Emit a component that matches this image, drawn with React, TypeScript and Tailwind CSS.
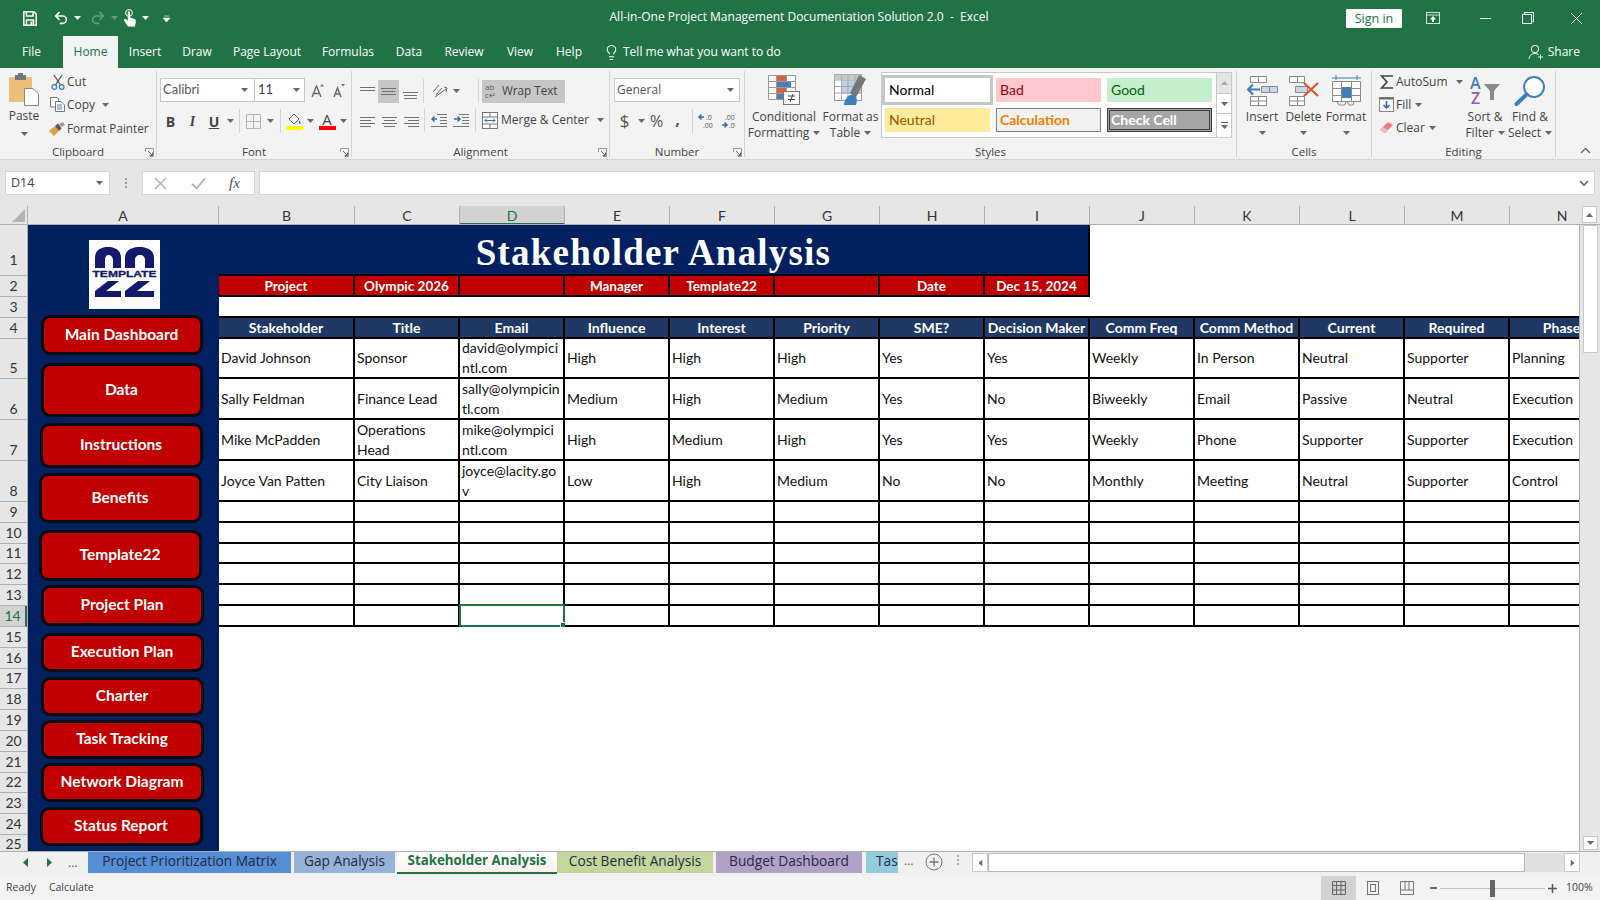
import { Lightbulb, Redo2, Undo2 } from "lucide-react";
import type { ReactNode } from "react";

const calibri = "font-['Lato',sans-serif]";

function Caret({ className = "" }: { className?: string }) {
  return (
    <svg width="7" height="4" viewBox="0 0 7 4" className={className}>
      <path d="M0 0h7L3.5 4z" fill="#666" />
    </svg>
  );
}

function Sep({ className = "" }: { className?: string }) {
  return <div className={"w-px h-[24px] bg-[#d4d4d4] " + className} />;
}

function Launcher() {
  return (
    <svg width="9" height="9" viewBox="0 0 9 9" className="absolute right-[2px] bottom-[0px]">
      <path d="M.5 4V.5H8.5V8.5H5" fill="none" stroke="#999" />
      <path d="M3 3L7.5 7.5M7.5 4.5V7.5H4.5" fill="none" stroke="#666" />
    </svg>
  );
}

function Group({ label, className, children, launcher = false }: { label: string; className: string; children: ReactNode; launcher?: boolean }) {
  return (
    <div className={"relative h-[86px] mt-[3px] border-r border-[#d4d4d4] flex flex-col shrink-0 " + className}>
      <div className="flex-1 min-h-0">{children}</div>
      <div className="h-[14px] leading-[14px] text-center text-[11.5px] text-[#444] -mb-[2px]">{label}</div>
      {launcher && <Launcher />}
    </div>
  );
}

function Slot({ className, children }: { className: string; children?: ReactNode }) {
  return <div className={"flex items-center justify-center shrink-0 " + className}>{children}</div>;
}

function Logo() {
  return (
    <svg width="71" height="69" viewBox="0 0 71 69" className="ml-[61px] mt-[15px] block bg-white">
      <g fill="#14196e">
        <path d="M6 28V18C6 10 12 7 19 7S32 10 32 18V28H24V20C24 17 22 15 19.500 15S16 17 16 20V28Z" />
        <path d="M36 28V18C36 10 43 7 50.500 7S65 10 65 18V28H56V20C56 17 54 15 51 15S46 17 46 20V28Z" />
        <path d="M6 57V51L19 41H30L17 51H32V57Z" />
        <path d="M36 57V51L49 41H61L48 51H65V57Z" />
      </g>
      <rect x="2" y="28" width="67" height="10" fill="#fff" />
      <text x="35.500" y="36.500" textAnchor="middle" fontFamily="Liberation Sans, sans-serif" fontWeight="700" fontSize="9" textLength="64" lengthAdjust="spacingAndGlyphs" fill="#14196e" stroke="#14196e" strokeWidth=".3">TEMPLATE</text>
    </svg>
  );
}

function NavButton({ label, className }: { label: string; className: string }) {
  return (
    <div className={"flex items-center justify-center bg-[#c00000] border-[3px] border-[#0a0a14] rounded-[9px] text-white font-bold text-[15.5px] pb-[1px] pr-[1px] " + className}>
      {label}
    </div>
  );
}

function TitleBar() {
  return (
    <div className="h-[36px] bg-[#217346] flex items-center text-white shrink-0">
      <div className="w-[23px]" />
      <svg width="14" height="15" viewBox="0 0 14 15" fill="none" stroke="#fff" strokeWidth="1.500">
        <path d="M.8.8H11L13.200 3V14.200H.8Z" />
        <path d="M3.500 1V5H10V1M3.500 14V9H10.500V14" />
        <path d="M7.500 10.500H9.500V14H7.500Z" fill="#fff" stroke="none" />
      </svg>
      <div className="w-[16px]" />
      <Undo2 size={16} strokeWidth={2.4} />
      <Caret className="ml-[5px] [&_path]:fill-white" />
      <Redo2 size={16} strokeWidth={2.4} className="ml-[9px] text-[#5f9f7f]" />
      <Caret className="ml-[5px] [&_path]:fill-[#5f9f7f]" />
      <svg width="14" height="18" viewBox="0 0 14 18" className="ml-[5px]">
        <circle cx="6" cy="4" r="3.400" fill="none" stroke="#fff" />
        <path d="M4.800 3.200C4.800 2 7 2 7 3.200V8.500L11.500 10C13 10.500 13 12 12.800 13L12 17.500H5L1 11.500C.5 10 2.500 9.500 3.500 10.500L4.800 11.800Z" fill="#fff" />
      </svg>
      <Caret className="ml-[5px] [&_path]:fill-white" />
      <svg width="7" height="7" viewBox="0 0 7 7" className="ml-[14px]"><path d="M1 1H6M0 3H7L3.500 7Z" fill="#fff" stroke="#fff" strokeWidth=".6" /></svg>
      <div className="flex-1 text-center text-[12px] ml-[280px] mr-[198px] pb-[2px] whitespace-nowrap">All-in-One Project Management Documentation Solution 2.0&nbsp; -&nbsp; Excel</div>
      <div className="w-[56px] h-[19px] bg-white text-[#217346] text-[12.500px] leading-[19px] text-center rounded-[1px] mr-[22px]">Sign in</div>
      <svg width="14" height="12" viewBox="0 0 14 12" fill="none" stroke="#cfe3d8" className="mr-[40px] ml-[2px]">
        <rect x=".5" y=".5" width="13" height="11" />
        <path d="M.5 3H13.500" />
        <path d="M7 4L10 7.500H8V10H6V7.500H4Z" fill="#fff" stroke="none" />
      </svg>
      <div className="w-[11px] h-px bg-white mr-[31px]" />
      <svg width="12" height="12" viewBox="0 0 12 12" fill="none" stroke="#fff" className="mr-[36px]">
        <rect x=".5" y="2.500" width="9" height="9" />
        <path d="M2.500 2.500V.5H11.500V9.500H9.500" />
      </svg>
      <svg width="13" height="13" viewBox="0 0 13 13" stroke="#fff" className="mr-[17px]"><path d="M1 1L12 12M12 1L1 12" /></svg>
    </div>
  );
}

function TabRow() {
  const tabs = [
    { label: "Insert", w: "w-[54px]" },
    { label: "Draw", w: "w-[50px]" },
    { label: "Page Layout", w: "w-[90px]" },
    { label: "Formulas", w: "w-[72px]" },
    { label: "Data", w: "w-[50px]" },
    { label: "Review", w: "w-[60px]" },
    { label: "View", w: "w-[52px]" },
    { label: "Help", w: "w-[46px]" },
  ];
  return (
    <div className="h-[32px] bg-[#217346] flex items-stretch text-white text-[12px] shrink-0">
      <div className="w-[63px] flex items-center justify-center">File</div>
      <div className="w-[55px] bg-[#f3f3f3] text-[#217346] flex items-center justify-center">Home</div>
      {tabs.map((t) => (
        <div key={t.label} className={t.w + " flex items-center justify-center"}>{t.label}</div>
      ))}
      <div className="flex items-center ml-[11px]">
        <Lightbulb size={17} strokeWidth={1.500} />
        <span className="ml-[3px]">Tell me what you want to do</span>
      </div>
      <div className="flex items-center ml-auto mr-[20px]">
        <svg width="16" height="16" viewBox="0 0 16 16" fill="none" stroke="#fff" className="mr-[4px]">
          <circle cx="7" cy="5" r="3.700" />
          <path d="M1 15C1.500 11 4 9.500 7 9.500C8.500 9.500 9.500 10 10.500 10.800M12.500 10.500V15.500M10 13H15" />
        </svg>
        Share
      </div>
    </div>
  );
}

function SmallRow({ icon, label, caret, caretClass = "ml-[5px]", className = "" }: { icon: ReactNode; label: string; caret?: boolean; caretClass?: string; className?: string }) {
  return (
    <div className={"flex items-center h-[23px] whitespace-nowrap " + className}>
      <div className="w-[19px] flex justify-center">{icon}</div>
      <span>{label}</span>
      {caret && <Caret className={caretClass} />}
    </div>
  );
}

function TallButton({ icon, lines, w }: { icon: ReactNode; lines: string[]; w: string }) {
  return (
    <div className={"flex flex-col items-center shrink-0 " + w}>
      <div className="h-[38px] flex items-center justify-center">{icon}</div>
      <div className="leading-[16px] text-center whitespace-nowrap">{lines[0]}</div>
      <div className="leading-[16px] h-[16px] text-center whitespace-nowrap flex items-center">
        {lines[1]}
        <Caret className={lines[1] ? "ml-[4px]" : ""} />
      </div>
    </div>
  );
}

function Lines({ rows }: { rows: [number, number, number][] }) {
  return (
    <svg width="15" height="15" viewBox="0 0 15 15" stroke="#707070">
      {rows.map((r, i) => (
        <path key={i} d={`M${r[0]} ${r[2]}.5H${r[1]}`} />
      ))}
    </svg>
  );
}

function Clipboard() {
  return (
    <Group label="Clipboard" className="w-[157px]" launcher>
      <div className="flex">
        <div className="w-[48px] flex flex-col items-center">
          <svg width="32" height="33" viewBox="0 0 32 33" className="mt-[2px]">
            <path d="M1 4H24V29H1Z" fill="#ecc07a" />
            <rect x="7" y="2" width="11" height="5" fill="#777" />
            <rect x="10" y="0" width="5" height="3" fill="#777" />
            <path d="M16.500 15.500H25L30.500 21V32.500H16.500Z" fill="#fff" stroke="#888" />
          </svg>
          <div className="leading-[16px] mt-[2px]">Paste</div>
          <Caret className="mt-[8px]" />
        </div>
        <div className="-mt-[1px]">
          <SmallRow label="Cut" icon={
            <svg width="14" height="16" viewBox="0 0 14 16" fill="none">
              <path d="M4.500 11L11 1M9.500 11L3 1" stroke="#555" strokeWidth="1.300" />
              <circle cx="3.300" cy="13" r="2.300" stroke="#3f7fbf" strokeWidth="1.300" />
              <circle cx="10.700" cy="13" r="2.300" stroke="#3f7fbf" strokeWidth="1.300" />
            </svg>} />
          <SmallRow label="Copy" caret caretClass="ml-[7px]" icon={
            <svg width="15" height="15" viewBox="0 0 15 15" fill="#fff" stroke="#777">
              <path d="M.5.5H7L8.500 2V10H.5Z" />
              <path d="M5.500 4.500H11L14.500 8V14.500H5.500Z" />
              <path d="M7 8H12M7 10H12M7 12H12" stroke="#4f81bd" />
            </svg>} />
          <div className="text-[11.7px] pt-[1px]">
            <SmallRow label="Format Painter" icon={
              <svg width="17" height="14" viewBox="0 0 17 14">
                <path d="M0 9L6 4L10 9L5 14Z" fill="#e0a14f" />
                <path d="M6 4L9 1.500L12.500 6.500L10 9Z" fill="#555" />
                <path d="M10 2L14 0L16 3L12 5Z" fill="#999" />
              </svg>} />
          </div>
        </div>
      </div>
    </Group>
  );
}

function FontGroup() {
  return (
    <Group label="Font" className="w-[195px]" launcher>
      <div className="flex items-center pt-[7px] pl-[3px]">
        <div className="w-[95px] h-[24px] bg-white border border-[#c8c8c8] flex items-center justify-between pl-[2px] pr-[6px] text-[#555] text-[12.500px]">
          <span className={calibri + " text-[13px]"}>Calibri</span><Caret />
        </div>
        <div className="w-[50px] h-[24px] bg-white border border-l-0 border-[#c8c8c8] flex items-center justify-between pl-[3px] pr-[4px] text-[#444]">
          <span className={calibri + " text-[13px]"}>11</span><Caret />
        </div>
        <Slot className="w-[22px] ml-[1px]">
          <svg width="15" height="15" viewBox="0 0 15 15" fill="none" stroke="#666" strokeWidth="1.400"><path d="M2 14L6.500 3L11 14M3.500 10.500H9.500" /><path d="M10 3.500L12 1L14 3.500Z" fill="#3f7fbf" stroke="none" /></svg>
        </Slot>
        <Slot className="w-[21px]">
          <svg width="15" height="15" viewBox="0 0 15 15" fill="none" stroke="#666" strokeWidth="1.400"><path d="M3 14L6.500 5L10 14M4.200 11H8.800" /><path d="M10 1L12 3.500L14 1Z" fill="#3f7fbf" stroke="none" /></svg>
        </Slot>
      </div>
      <div className="flex items-center mt-[7px] pl-[3px] h-[24px] text-[#444] text-[14px]">
        <Slot className="w-[21px] font-bold">B</Slot>
        <Slot className="w-[23px] italic font-bold font-['Liberation_Serif',serif]">I</Slot>
        <Slot className="w-[20px] font-bold underline">U</Slot>
        <Slot className="w-[12px]"><Caret /></Slot>
        <Slot className="w-[7px]"><Sep /></Slot>
        <Slot className="w-[21px]">
          <svg width="15" height="15" viewBox="0 0 15 15" fill="none" stroke="#b4b4b4"><path d="M.5.5H14.500V14.500H.5ZM7.500.5V14.500M.5 7.500H14.500" /></svg>
        </Slot>
        <Slot className="w-[12px]"><Caret /></Slot>
        <Slot className="w-[8px]"><Sep /></Slot>
        <Slot className="w-[20px]">
          <svg width="17" height="18" viewBox="0 0 17 18">
            <path d="M3 7L8 2L13 7L8 12Z" fill="#fff" stroke="#666" />
            <path d="M13 8C15 10 15 11.500 14 12C12.500 12 12.500 10 13 8Z" fill="#3f7fbf" />
            <rect x="0" y="14" width="17" height="4" fill="#ffff00" />
          </svg>
        </Slot>
        <Slot className="w-[12px]"><Caret /></Slot>
        <Slot className="w-[22px] flex-col leading-none">
          <span className="text-[15px] leading-[14px] text-[#444]">A</span>
          <span className="w-[17px] h-[4px] bg-[#ff0000]" />
        </Slot>
        <Slot className="w-[10px]"><Caret /></Slot>
      </div>
    </Group>
  );
}

function Alignment() {
  return (
    <Group label="Alignment" className="w-[258px]" launcher>
      <div className="flex items-center pt-[8px] pl-[4px] h-[32px]">
        <Slot className="w-[22px]"><Lines rows={[[0, 15, 3], [0, 15, 6]]} /></Slot>
        <Slot className="w-[21px] h-[23px] bg-[#c6c6c6]"><Lines rows={[[0, 15, 4], [1, 14, 7], [0, 15, 10]]} /></Slot>
        <Slot className="w-[22px]"><Lines rows={[[0, 15, 8], [1, 14, 11], [1, 14, 14]]} /></Slot>
        <Slot className="w-[5px]"><Sep /></Slot>
        <Slot className="w-[24px] ml-[2px]">
          <svg width="18" height="16" viewBox="0 0 18 16" fill="none" stroke="#666"><path d="M2 9L8 2M5 12L11 5M4 14L15 6" /><path d="M13 4L16 5L15 9" /></svg>
        </Slot>
        <Caret className="ml-[1px]" />
        <Sep className="ml-[18px]" />
        <div className="w-[83px] h-[23px] ml-[3px] bg-[#c6c6c6] flex items-center pl-[3px] text-[#444]">
          <span className="w-[16px] text-[8px] leading-[8px] text-[#555]">ab<br />c↵</span>
          <span className="ml-[1px] text-[11.7px]">Wrap Text</span>
        </div>
      </div>
      <div className="flex items-center pt-[5px] pl-[4px]">
        <Slot className="w-[22px]"><Lines rows={[[0, 15, 4], [0, 11, 7], [0, 15, 10], [0, 11, 13]]} /></Slot>
        <Slot className="w-[22px]"><Lines rows={[[0, 15, 4], [2, 13, 7], [0, 15, 10], [2, 13, 13]]} /></Slot>
        <Slot className="w-[22px]"><Lines rows={[[0, 15, 4], [4, 15, 7], [0, 15, 10], [4, 15, 13]]} /></Slot>
        <Slot className="w-[4px]"><Sep /></Slot>
        <Slot className="w-[22px] ml-[2px]">
          <svg width="16" height="14" viewBox="0 0 16 14" fill="none"><path d="M6 1.500H16M9 4.500H16M9 7.500H16M9 10.500H16M0 13.500H16" stroke="#777" /><path d="M6 6H1M3.500 3.500L1 6L3.500 8.500" stroke="#2f6fb5" strokeWidth="1.500" /></svg>
        </Slot>
        <Slot className="w-[22px]">
          <svg width="16" height="14" viewBox="0 0 16 14" fill="none"><path d="M6 1.500H16M9 4.500H16M9 7.500H16M9 10.500H16M0 13.500H16" stroke="#777" /><path d="M1 6H7M4.500 3.500L7 6L4.500 8.500" stroke="#2f6fb5" strokeWidth="1.500" /></svg>
        </Slot>
        <Sep className="ml-[3px]" />
        <svg width="16" height="17" viewBox="0 0 16 17" fill="#fff" stroke="#777" className="ml-[6px]">
          <rect x=".5" y=".5" width="15" height="16" />
          <path d="M.5 5H15.500M.5 12H15.500M8 .5V5M8 12V16.500" />
          <path d="M3 8.500H13M5 6.500L3 8.500L5 10.500M11 6.500L13 8.500L11 10.500" stroke="#2f6fb5" fill="none" />
        </svg>
        <span className="ml-[3px] whitespace-nowrap text-[#444]">Merge &amp; Center</span>
        <Caret className="ml-[8px]" />
      </div>
    </Group>
  );
}

function NumberGroup() {
  return (
    <Group label="Number" className="w-[135px]" launcher>
      <div className="pt-[7px] pl-[4px]">
        <div className="w-[126px] h-[24px] bg-white border border-[#c8c8c8] flex items-center justify-between pl-[2px] pr-[5px] text-[#555]">General<Caret /></div>
      </div>
      <div className="flex items-center mt-[7px] h-[24px] text-[#555] pl-[5px]">
        <Slot className="w-[19px] text-[17px]">$</Slot>
        <Slot className="w-[14px]"><Caret /></Slot>
        <Slot className="w-[17px] text-[16px]">%</Slot>
        <Slot className="w-[25px] text-[16px] font-bold pb-[4px]">,</Slot>
        <Sep className="ml-[2px]" />
        <svg width="16" height="18" viewBox="0 0 16 18" className="ml-[6px] overflow-visible">
          <path d="M0 5H5M2.500 2.500L0 5L2.500 7.500" fill="none" stroke="#2f6fb5" strokeWidth="1.500" />
          <text x="7" y="8" fontSize="7" fill="#555" fontFamily="Open Sans, sans-serif">.0</text>
          <text x="4" y="16" fontSize="7" fill="#555" fontFamily="Open Sans, sans-serif">.00</text>
        </svg>
        <svg width="16" height="18" viewBox="0 0 16 18" className="ml-[7px] overflow-visible">
          <text x="3" y="8" fontSize="7" fill="#555" fontFamily="Open Sans, sans-serif">.00</text>
          <path d="M0 13H5M2.500 10.500L5 13L2.500 15.500" fill="none" stroke="#2f6fb5" strokeWidth="1.500" />
          <text x="7" y="16" fontSize="7" fill="#555" fontFamily="Open Sans, sans-serif">.0</text>
        </svg>
      </div>
    </Group>
  );
}

function Styles() {
  return (
    <Group label="Styles" className="w-[492px]">
      <div className="flex text-[#444]">
        <div className="w-[3px]" />
        <TallButton w="w-[72px]" lines={["Conditional", "Formatting"]} icon={
          <svg width="32" height="30" viewBox="0 0 32 30">
            <path d="M.5.5H27.500V24.500H.5ZM.5 6.500H27.500M.5 12.500H27.500M.5 18.500H27.500M8.500.5V24.500M18.500.5V24.500" fill="#fff" stroke="#9a9a9a" />
            <rect x="9" y="1" width="9" height="5" fill="#d9623c" />
            <rect x="9" y="7" width="14" height="5" fill="#4a7ebb" />
            <rect x="9" y="13" width="9" height="5" fill="#d9623c" />
            <rect x="9" y="19" width="6" height="5" fill="#4a7ebb" />
            <rect x="15.500" y="16.500" width="16" height="13" fill="#fff" stroke="#777" />
            <path d="M20 21H27M20 24.500H27M25 19L22 27" stroke="#444" fill="none" />
          </svg>} />
        <TallButton w="w-[61px]" lines={["Format as", "Table"]} icon={
          <svg width="33" height="32" viewBox="0 0 33 32">
            <rect x=".5" y=".5" width="27" height="26" fill="#fff" stroke="#999" />
            <rect x=".5" y=".5" width="27" height="5" fill="#c8c8c8" />
            <rect x="8" y="6" width="19" height="14" fill="#bcd0e8" />
            <path d="M.5 6H27.500M.5 12.500H27.500M.5 19H27.500M7.500.5V26M14 .5V26M21 .5V26" stroke="#aaa" fill="none" />
            <path d="M33 5L26 1L17 19L23 23Z" fill="#777" transform="translate(-1,0)" />
            <path d="M10 31C10 26 14 21 19 20C24 23 23 27 22 31Z" fill="#3f7fbf" />
          </svg>} />
        <div className="w-[351px] h-[66px] mt-[1px] bg-white border border-[#c8c8c8] shrink-0 flex">
          <div className="grid grid-cols-[105px_105px_105px] grid-rows-[24px_24px] gap-x-[6px] gap-y-[6px] pl-[3px] pt-[5px] w-[334px] text-[14px]">
            <div className={calibri + " bg-white outline-[3px] outline-[#c6c6c6] text-black pl-[4px] leading-[24px]"}>Normal</div>
            <div className={calibri + " bg-[#ffc7ce] text-[#9c0006] pl-[4px] leading-[24px]"}>Bad</div>
            <div className={calibri + " bg-[#c6efce] text-[#006100] pl-[4px] leading-[24px]"}>Good</div>
            <div className={calibri + " bg-[#ffeb9c] text-[#9c5700] pl-[4px] leading-[24px]"}>Neutral</div>
            <div className={calibri + " bg-[#f2f2f2] border border-[#7f7f7f] text-[#fa7d00] font-bold pl-[3px] leading-[22px]"}>Calculation</div>
            <div className={calibri + " bg-[#a5a5a5] border-[3px] border-double border-[#3f3f3f] text-white font-bold pl-[1px] leading-[18px]"}>Check Cell</div>
          </div>
          <div className="w-[15px] ml-auto flex flex-col border-l border-[#c8c8c8]">
            <Slot className="h-[21px] bg-[#e6e6e6] border-b border-[#c8c8c8]"><Caret className="rotate-180 [&_path]:fill-[#aaa]" /></Slot>
            <Slot className="h-[20px] border-b border-[#c8c8c8]"><Caret /></Slot>
            <Slot className="flex-1 flex-col gap-[2px]"><div className="w-[7px] h-px bg-[#666]" /><Caret /></Slot>
          </div>
        </div>
      </div>
    </Group>
  );
}

function Cells() {
  return (
    <Group label="Cells" className="w-[135px]">
      <div className="flex pl-[4px] text-[#444]">
        <TallButton w="w-[42px]" lines={["Insert", ""]} icon={
          <svg width="31" height="31" viewBox="0 0 31 31" fill="#fff" stroke="#8a8a8a">
            <path d="M3.500 1.500H19.500V7.500H3.500ZM11.500 1.500V7.500M3.500 21.500H19.500V30.500H3.500ZM11.500 21.500V30.500M3.500 26H19.500" />
            <path d="M14.500 11.500H30.500V17.500H14.500ZM22.500 11.500V17.500" fill="#c5d7ea" />
            <path d="M13 14.500H1M6 9.500L1 14.500L6 19.500" fill="none" stroke="#3f7fbf" strokeWidth="2.200" />
          </svg>} />
        <TallButton w="w-[41px]" lines={["Delete", ""]} icon={
          <svg width="31" height="31" viewBox="0 0 31 31" fill="#fff" stroke="#8a8a8a">
            <path d="M1.500 1.500H16.500V7.500H1.500ZM9.500 1.500V7.500M1.500 21.500H16.500V30.500H1.500ZM9.500 21.500V30.500M1.500 26H16.500" />
            <path d="M7.500 11.500H19.500V17.500H7.500Z" fill="#c5d7ea" />
            <path d="M16 8L30 21M30 8L16 21" fill="none" stroke="#e0532c" strokeWidth="2.200" />
          </svg>} />
        <TallButton w="w-[44px]" lines={["Format", ""]} icon={
          <svg width="31" height="32" viewBox="0 0 31 32" fill="#fff" stroke="#8a8a8a">
            <path d="M1 4H30M5 1V6M26 1V6" stroke="#3f7fbf" fill="none" />
            <path d="M1.500 7.500H29.500V27.500H1.500ZM1.500 14.500H29.500M1.500 21.500H29.500M10.500 7.500V27.500M20.500 7.500V27.500" />
            <rect x="11" y="13" width="9" height="11" fill="#3f7fbf" stroke="none" />
            <path d="M6 27.500L8 31H14L15 27.500M16 27.500L18 31H22L23 27.500" fill="none" />
          </svg>} />
      </div>
    </Group>
  );
}

function Editing() {
  return (
    <Group label="Editing" className="w-[184px]">
      <div className="flex text-[#444]">
        <div className="pl-[5px] w-[93px] -mt-[1px]">
          <SmallRow label="AutoSum" caret caretClass="ml-[8px]" icon={
            <svg width="13" height="14" viewBox="0 0 13 14" fill="none" stroke="#444" strokeWidth="1.700"><path d="M13 1H1.500L7 7L1.500 13H13" /></svg>} />
          <SmallRow label="Fill" caret caretClass="ml-[4px]" icon={
            <svg width="15" height="15" viewBox="0 0 15 15" fill="#fff" stroke="#888"><rect x=".5" y=".5" width="14" height="14" /><path d="M1 1.500H14" strokeWidth="2" stroke="#666" /><path d="M7.500 4V11M4.500 8L7.500 11L10.500 8" fill="none" stroke="#2f6fb5" strokeWidth="1.700" /></svg>} />
          <SmallRow label="Clear" caret caretClass="ml-[4px]" icon={
            <svg width="14" height="13" viewBox="0 0 14 13"><path d="M0 9L8 1L13 4L5 12Z" fill="#ee7b88" /><path d="M0 9L3 6L8 9L5 12Z" fill="#f4b6bd" /></svg>} />
        </div>
        <div className="w-[42px] ml-[-1px]">
          <TallButton w="w-[42px]" lines={["Sort &", "Filter"]} icon={
            <svg width="31" height="30" viewBox="0 0 31 30" className="overflow-visible">
              <text x="0" y="14" fontSize="16" fontWeight="600" fontFamily="Open Sans, sans-serif" fill="#3f7fbf">A</text>
              <text x="1" y="29" fontSize="16" fontWeight="600" fontFamily="Open Sans, sans-serif" fill="#9b59b6">Z</text>
              <path d="M14 9H30L24 16V25H20V16Z" fill="#8a8a8a" />
            </svg>} />
        </div>
        <div className="w-[46px] ml-[1px]">
          <TallButton w="w-[46px]" lines={["Find &", "Select"]} icon={
            <svg width="33" height="31" viewBox="0 0 33 31" fill="none" stroke="#3f7fbf">
              <circle cx="20" cy="12" r="10" strokeWidth="2" fill="#fff" />
              <path d="M12.500 19.500L2.500 29" strokeWidth="4" strokeLinecap="round" />
            </svg>} />
        </div>
      </div>
    </Group>
  );
}

function Ribbon() {
  return (
    <div className="h-[92px] bg-[#f3f3f3] border-b border-[#d4d4d4] flex text-[12px] text-[#444] shrink-0">
      <Clipboard />
      <FontGroup />
      <Alignment />
      <NumberGroup />
      <Styles />
      <Cells />
      <Editing />
      <div className="flex-1 flex justify-end items-end pb-[5px] pr-[9px]">
        <svg width="11" height="7" viewBox="0 0 11 7" fill="none" stroke="#666" strokeWidth="1.300"><path d="M1 6L5.500 1.500L10 6" /></svg>
      </div>
    </div>
  );
}

function FormulaBar() {
  return (
    <div className="h-[46px] bg-[#e6e6e6] pt-[11px] pl-[5px] pr-[5px] flex items-start shrink-0 text-[12.500px] text-[#444]">
      <div className="w-[105px] h-[24px] bg-white border border-[#d4d4d4] flex items-center justify-between pl-[5px] pr-[6px]">D14<Caret /></div>
      <div className="w-[32px] h-[24px] flex flex-col items-center justify-center gap-[2px]">
        <div className="w-[2px] h-[2px] bg-[#999]" />
        <div className="w-[2px] h-[2px] bg-[#999]" />
        <div className="w-[2px] h-[2px] bg-[#999]" />
      </div>
      <div className="w-[113px] h-[24px] bg-white border border-[#d4d4d4] flex items-center pl-[11px]">
        <svg width="13" height="13" viewBox="0 0 13 13" stroke="#b0b0b0" strokeWidth="1.400"><path d="M1 1L12 12M12 1L1 12" /></svg>
        <svg width="15" height="13" viewBox="0 0 15 13" fill="none" stroke="#b0b0b0" strokeWidth="1.800" className="ml-[24px]"><path d="M1 7L5.500 11.500L14 1.500" /></svg>
        <span className="ml-[23px] font-['Liberation_Serif',serif] italic text-[15px] text-[#555]">fx</span>
      </div>
      <div className="flex-1 h-[24px] ml-[4px] bg-white border border-[#d4d4d4] flex items-center justify-end pr-[5px]">
        <svg width="10" height="7" viewBox="0 0 10 7" fill="none" stroke="#666" strokeWidth="1.600"><path d="M1 1L5 5L9 1" /></svg>
      </div>
    </div>
  );
}

function ColumnHeaders() {
  const cols = ["B", "C", "D", "E", "F", "G", "H", "I", "J", "K", "L", "M", "N"];
  return (
    <div className={"h-[19px] bg-[#e6e6e6] flex text-[14px] text-[#333] shrink-0 border-b border-[#b0b0b0] " + calibri}>
      <div className="w-[28px] shrink-0 border-r border-[#b0b0b0] flex items-end justify-end pb-[2px] pr-[2px]">
        <svg width="13" height="13" viewBox="0 0 13 13"><path d="M13 0V13H0Z" fill="#b4b4b4" /></svg>
      </div>
      <div className="w-[191px] shrink-0 border-r border-[#b0b0b0] text-center leading-[18px] pt-[1px]">A</div>
      <div className="w-[1360px] shrink-0 overflow-hidden flex">
        {cols.map((c) => (
          <div
            key={c}
            className={
              (c === "B" ? "w-[136px] " : "w-[105px] ") +
              "shrink-0 text-center leading-[18px] pt-[1px] border-r " +
              (c === "D" ? "bg-[#d2d2d2] text-[#217346] border-[#b0b0b0] border-b-2 border-b-[#217346] h-[19px]" : "border-[#b0b0b0]")
            }
          >
            {c}
          </div>
        ))}
      </div>
      <div className="w-[21px] shrink-0 flex justify-center">
        <div className="w-[15px] h-[17px] bg-white border border-[#c8c8c8] flex items-center justify-center">
          <Caret className="rotate-180" />
        </div>
      </div>
    </div>
  );
}

function RowHeaders() {
  const rows = [
    "h-[51px] pb-[5px]", "h-[21px]", "h-[21px]", "h-[21px]", "h-[40px]", "h-[41px]", "h-[41px]", "h-[41px]",
    "h-[21px]", "h-[21px]", "h-[20px]", "h-[21px]", "h-[21px]", "h-[21px]",
    "h-[21px]", "h-[21px]", "h-[20px]", "h-[21px]", "h-[21px]", "h-[21px]", "h-[21px]", "h-[20px]", "h-[21px]", "h-[21px]", "h-[20px]",
  ];
  return (
    <div className={"w-[28px] shrink-0 bg-[#e6e6e6] border-r border-[#b0b0b0] text-[14px] text-[#333] overflow-hidden " + calibri}>
      {rows.map((h, i) => (
        <div
          key={i}
          className={
            h +
            " flex items-end justify-center leading-[20px] border-b border-[#b0b0b0] " +
            (i === 13 ? "bg-[#d2d2d2] text-[#217346] border-r-2 border-r-[#217346]" : "")
          }
        >
          {i + 1}
        </div>
      ))}
    </div>
  );
}

const tableRows: string[][] = [
  ["David Johnson", "Sponsor", "david@olympici\nntl.com", "High", "High", "High", "Yes", "Yes", "Weekly", "In Person", "Neutral", "Supporter", "Planning"],
  ["Sally Feldman", "Finance Lead", "sally@olympicin\ntl.com", "Medium", "High", "Medium", "Yes", "No", "Biweekly", "Email", "Passive", "Neutral", "Execution"],
  ["Mike McPadden", "Operations\nHead", "mike@olympici\nntl.com", "High", "Medium", "High", "Yes", "Yes", "Weekly", "Phone", "Supporter", "Supporter", "Execution"],
  ["Joyce Van Patten", "City Liaison", "joyce@lacity.go\nv", "Low", "High", "Medium", "No", "No", "Monthly", "Meeting", "Neutral", "Supporter", "Control"],
];

const headers = ["Stakeholder", "Title", "Email", "Influence", "Interest", "Priority", "SME?", "Decision Maker", "Comm Freq", "Comm Method", "Current", "Required", "Phase"];

function Worksheet() {
  const empty = Array.from({ length: 6 * 13 }, (_, i) => i);
  return (
    <div className={"w-[1360px] shrink-0 overflow-hidden bg-white " + calibri}>
      <div className="grid grid-cols-[136px_repeat(12,105px)] grid-rows-[51px_21px_21px_21px_40px_41px_41px_41px_21px_21px_20px_21px_21px_21px] w-[1396px] text-[14px] text-[#111]">
        <div className="col-span-8 bg-[#002060] text-white border-b-2 border-r-2 border-black flex items-center justify-center font-['Liberation_Serif',serif] font-bold text-[37px] tracking-[1.2px] pt-[7px]">
          Stakeholder Analysis
        </div>
        <div className="col-span-5" />
        {["Project", "Olympic 2026", "", "Manager", "Template22", "", "Date", "Dec 15, 2024"].map((t, i) => (
          <div key={i} className="bg-[#c00000] text-white font-bold text-[13.5px] text-center leading-[20px] border-r-2 border-b-2 border-black">{t}</div>
        ))}
        <div className="col-span-5" />
        <div className="col-span-13 border-b-2 border-black" />
        {headers.map((h) => (
          <div key={h} className="bg-[#1f3864] text-white font-bold text-center leading-[19px] border-r-2 border-b-2 border-black whitespace-nowrap">{h}</div>
        ))}
        {tableRows.flat().map((t, i) => (
          <div key={i} className="flex items-center pl-[2px] leading-[20px] whitespace-pre-line border-r-2 border-b-2 border-black">{t}</div>
        ))}
        {empty.map((i) => (
          <div key={i} className="relative border-r-2 border-b-2 border-black">
            {i === 67 && (
              <div className="absolute -left-[1px] -top-[2px] w-[106px] h-[23px] border-2 border-[#217346]">
                <div className="absolute -right-[3px] -bottom-[3px] w-[6px] h-[6px] bg-[#217346] border border-white" />
              </div>
            )}
          </div>
        ))}
      </div>
    </div>
  );
}

function Sheet() {
  return (
    <div className="h-[626px] flex shrink-0 overflow-hidden">
      <RowHeaders />
      <div className={"w-[191px] shrink-0 bg-[#002060] overflow-hidden " + calibri}>
        <Logo />
        <NavButton label="Main Dashboard" className="ml-[13px] mt-[6px] w-[162px] h-[40px]" />
        <NavButton label="Data" className="ml-[13px] mt-[8px] w-[162px] h-[54px]" />
        <NavButton label="Instructions" className="ml-[12px] mt-[6px] w-[163px] h-[45px]" />
        <NavButton label="Benefits" className="ml-[11px] mt-[5px] w-[163px] h-[50px]" />
        <NavButton label="Template22" className="ml-[11px] mt-[7px] w-[163px] h-[51px]" />
        <NavButton label="Project Plan" className="ml-[13px] mt-[4px] w-[163px] h-[41px]" />
        <NavButton label="Execution Plan" className="ml-[13px] mt-[7px] w-[163px] h-[39px]" />
        <NavButton label="Charter" className="ml-[13px] mt-[5px] w-[163px] h-[39px]" />
        <NavButton label="Task Tracking" className="ml-[13px] mt-[4px] w-[163px] h-[39px]" />
        <NavButton label="Network Diagram" className="ml-[13px] mt-[4px] w-[163px] h-[39px]" />
        <NavButton label="Status Report" className="ml-[12px] mt-[5px] w-[163px] h-[39px]" />
      </div>
      <Worksheet />
      <div className="w-[21px] shrink-0 bg-[#e6e6e6] border-l border-[#b0b0b0] flex flex-col items-center">
        <div className="w-[15px] h-[128px] bg-white border border-[#c8c8c8]" />
        <div className="flex-1" />
        <div className="w-[15px] h-[14px] bg-white border border-[#c8c8c8] mb-[1px] flex items-center justify-center"><Caret /></div>
      </div>
    </div>
  );
}

function SheetTabs() {
  return (
    <div className="h-[25px] bg-[#f0f0f0] border-t border-[#b0b0b0] flex text-[13.7px] leading-[17px] text-[#1f2a44] shrink-0">
      <div className="w-[88px] h-[21px] flex items-center text-[#217346] shrink-0">
        <svg width="5" height="9" viewBox="0 0 5 9" className="ml-[23px]"><path d="M5 0V9L0 4.500Z" fill="#217346" /></svg>
        <svg width="5" height="9" viewBox="0 0 5 9" className="ml-[19px]"><path d="M0 0V9L5 4.500Z" fill="#217346" /></svg>
        <span className="ml-[16px] text-[12px]">...</span>
      </div>
      <div className="w-[203px] h-[21px] bg-[#558ed5] text-center shrink-0">Project Prioritization Matrix</div>
      <div className="w-[101px] h-[21px] ml-[3px] bg-[#95b3d7] text-center shrink-0">Gap Analysis</div>
      <div className="w-[160px] h-[22px] ml-[2px] bg-gradient-to-b from-white to-[#fbeeee] border-b-2 border-[#217346] text-[#217346] font-bold text-[13.3px] text-center shrink-0">Stakeholder Analysis</div>
      <div className="w-[156px] h-[21px] bg-[#c3d69b] text-center shrink-0">Cost Benefit Analysis</div>
      <div className="w-[146px] h-[21px] ml-[3px] bg-[#b3a2c7] text-center shrink-0">Budget Dashboard</div>
      <div className="w-[32px] h-[21px] ml-[4px] bg-[#93cddd] pl-[10px] overflow-hidden whitespace-nowrap shrink-0">Tas</div>
      <span className="ml-[6px] text-[12px] text-[#217346] shrink-0">...</span>
      <svg width="18" height="18" viewBox="0 0 18 18" fill="none" stroke="#777" className="ml-[12px] mt-[1px] shrink-0">
        <circle cx="9" cy="9" r="8" />
        <path d="M9 4.500V13.500M4.500 9H13.500" strokeWidth="1.300" />
      </svg>
      <div className="ml-[14px] mt-[3px] flex flex-col gap-[2px] shrink-0">
        <div className="w-[2px] h-[2px] bg-[#aaa]" />
        <div className="w-[2px] h-[2px] bg-[#aaa]" />
        <div className="w-[2px] h-[2px] bg-[#aaa]" />
      </div>
      <div className="ml-[13px] mt-[1px] w-[608px] h-[19px] flex bg-[#e0e0e0] shrink-0">
        <div className="w-[16px] bg-white border border-[#c8c8c8] flex items-center justify-center"><Caret className="rotate-90" /></div>
        <div className="w-[537px] bg-white border border-[#b8b8b8]" />
        <div className="flex-1" />
        <div className="w-[16px] bg-white border border-[#c8c8c8] flex items-center justify-center"><Caret className="-rotate-90" /></div>
      </div>
    </div>
  );
}

function StatusBar() {
  return (
    <div className="h-[24px] bg-[#f3f3f3] flex items-center text-[10.5px] text-[#444] shrink-0">
      <span className="ml-[6px]">Ready</span>
      <span className="ml-[13px]">Calculate</span>
      <div className="ml-auto flex items-center h-full">
        <div className="w-[35px] h-full bg-[#d2d2d2] flex items-center justify-center">
          <svg width="14" height="14" viewBox="0 0 14 14" fill="none" stroke="#666"><path d="M.5.5H13.500V13.500H.5ZM.5 4.500H13.500M.5 9H13.500M4.500.5V13.500M9 .5V13.500" /></svg>
        </div>
        <svg width="14" height="14" viewBox="0 0 14 14" fill="none" stroke="#777" className="ml-[10px]"><rect x="1.500" y=".5" width="11" height="13" /><rect x="4.500" y="3.500" width="5" height="7" /></svg>
        <svg width="14" height="14" viewBox="0 0 14 14" fill="none" stroke="#777" className="ml-[20px]"><path d="M.5.5H13.500V13.500H.5ZM.5 9H13.500M5 .5V9M9 .5V9" /></svg>
        <div className="w-[7px] h-[2px] bg-[#666] ml-[16px]" />
        <div className="relative w-[105px] h-px bg-[#c0c0c0] ml-[3px]">
          <div className="absolute left-[50px] -top-[8px] w-[5px] h-[17px] bg-[#666]" />
        </div>
        <svg width="9" height="9" viewBox="0 0 9 9" stroke="#555" strokeWidth="1.500" className="ml-[3px]"><path d="M4.500 0V9M0 4.500H9" /></svg>
        <span className="ml-[9px] mr-[8px] w-[26px] text-right">100%</span>
      </div>
    </div>
  );
}

export default function App() {
  return (
    <div className="w-[1600px] h-[900px] overflow-hidden bg-white flex flex-col font-['Open_Sans',sans-serif]">
      <TitleBar />
      <TabRow />
      <Ribbon />
      <FormulaBar />
      <ColumnHeaders />
      <Sheet />
      <SheetTabs />
      <StatusBar />
    </div>
  );
}
